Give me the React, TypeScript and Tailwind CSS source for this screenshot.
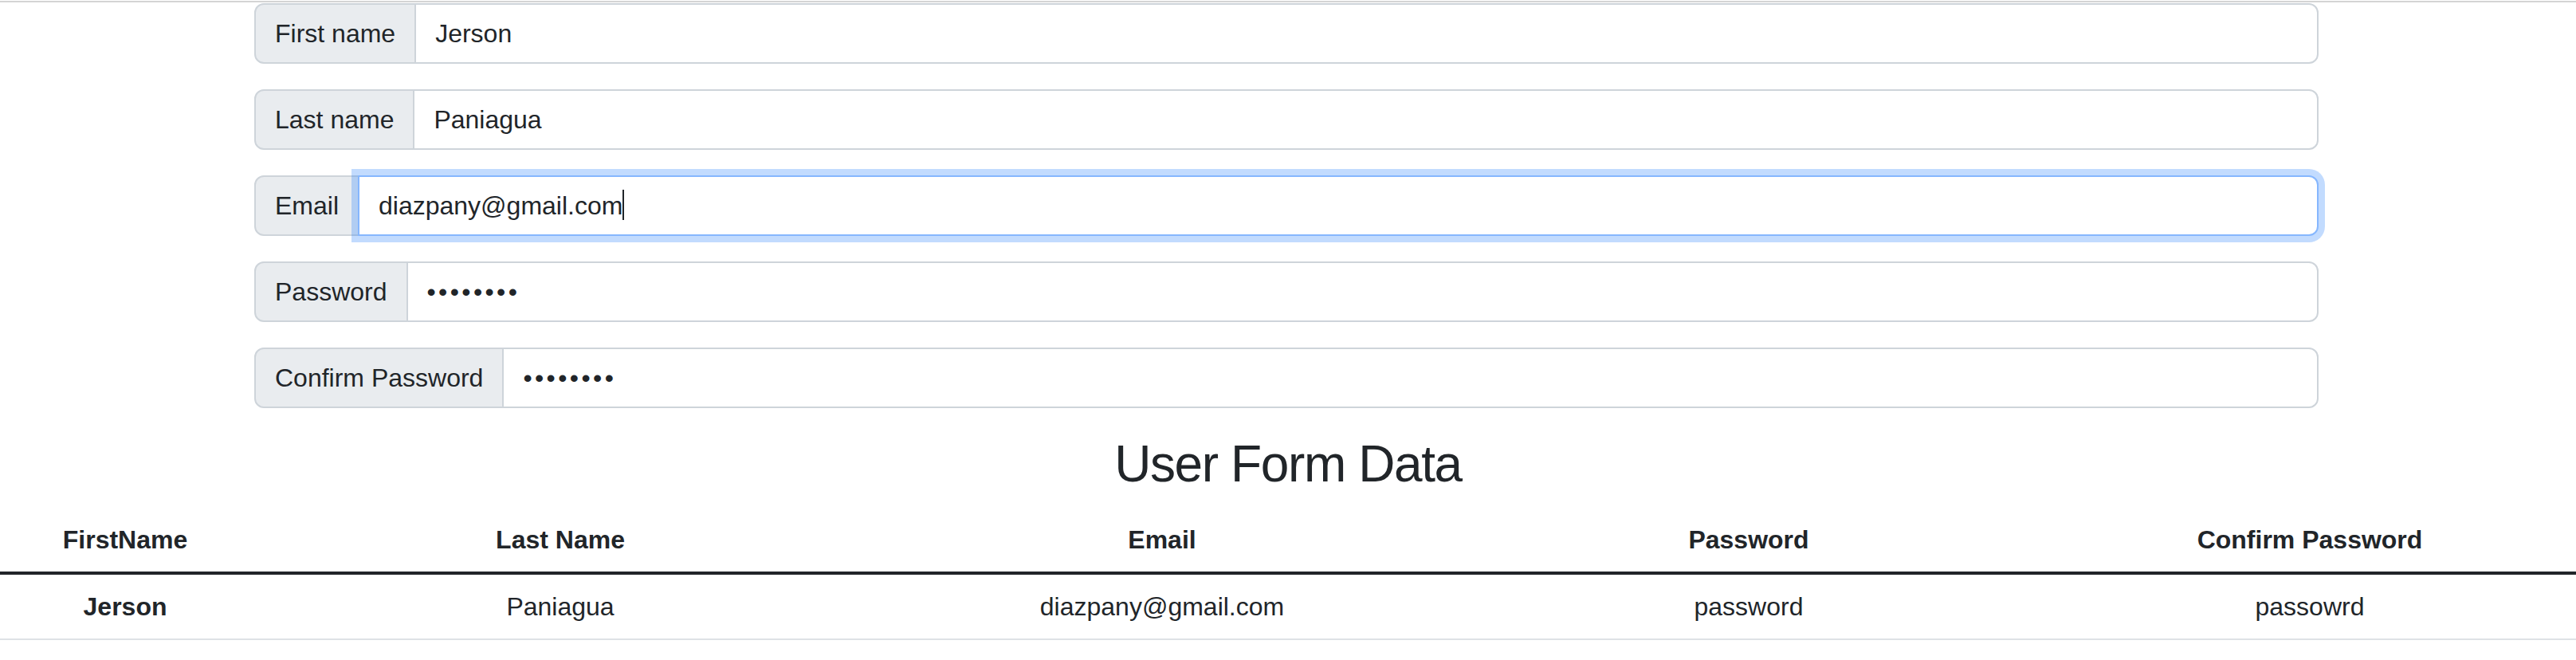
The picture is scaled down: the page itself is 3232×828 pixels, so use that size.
import React from "react";

const FONT = "font-['Liberation_Sans','Helvetica_Neue',Arial,sans-serif]";

function Field({
  label,
  value,
  type = "text",
  focused = false,
}: {
  label: string;
  value: string;
  type?: string;
  focused?: boolean;
}) {
  const base = "w-full h-full px-[24px] py-[12px] bg-white border-2 rounded-r-[12px] outline-none text-[32px] leading-[48px] text-[#212529]";
  let cls = `${base} border-[#ced4da]`;
  if (focused) cls = `${base} relative z-10 border-[#86b7fe] shadow-[0_0_0_8px_rgba(13,110,253,0.25)]`;
  else if (type === "password") cls = `${base} border-[#ced4da] tracking-[3.4px]`;

  return (
    <div className="flex w-full h-[76px] mb-[32px]">
      <span className="flex items-center shrink-0 px-[24px] bg-[#e9ecef] border-2 border-[#ced4da] rounded-l-[12px] text-[32px] leading-[48px] text-[#212529] whitespace-nowrap">
        {label}
      </span>
      <div className="relative flex-1 -ml-[2px]">
        <input type={type} value={value} readOnly className={cls} />
        {focused && (
          <span className="absolute z-20 left-[332px] top-[18px] w-[2px] h-[38px] bg-[#212529]" />
        )}
      </div>
    </div>
  );
}

const columns = [
  { name: "FirstName", w: "w-[314px]" },
  { name: "Last Name", w: "w-[778px]" },
  { name: "Email", w: "w-[732px]" },
  { name: "Password", w: "w-[740px]" },
  { name: "Confirm Password", w: "w-[668px]" },
];

export default function App() {
  return (
    <div className={`${FONT} bg-white text-[#212529] w-[3232px] h-[828px] overflow-hidden pt-[1px]`}>
      <div className="h-[2px] bg-[#d4d4d4]" />

      <div className="ml-[319px] w-[2590px] mt-[1px]">
        <Field label="First name" value="Jerson" />
        <Field label="Last name" value="Paniagua" />
        <Field label="Email" value="diazpany@gmail.com" type="email" focused />
        <Field label="Password" value="password" type="password" />
        <Field label="Confirm Password" value="passowrd" type="password" />
      </div>

      <h2 className="text-center text-[64px] leading-[76.8px] font-medium tracking-[-1.4px] mb-[16px]">
        User Form Data
      </h2>

      <table className="w-full border-separate border-spacing-0 text-[32px] leading-[48px] text-center">
        <colgroup>
          {columns.map((c) => (
            <col key={c.name} className={c.w} />
          ))}
        </colgroup>
        <thead>
          <tr>
            {columns.map((c) => (
              <th key={c.name} className="p-[16px] font-bold border-b-4 border-[#212529]">
                {c.name}
              </th>
            ))}
          </tr>
        </thead>
        <tbody>
          <tr>
            <th scope="row" className="p-[16px] font-bold border-b-2 border-[#dee2e6]">Jerson</th>
            <td className="p-[16px] border-b-2 border-[#dee2e6]">Paniagua</td>
            <td className="p-[16px] border-b-2 border-[#dee2e6]">diazpany@gmail.com</td>
            <td className="p-[16px] border-b-2 border-[#dee2e6]">password</td>
            <td className="p-[16px] border-b-2 border-[#dee2e6]">passowrd</td>
          </tr>
        </tbody>
      </table>
    </div>
  );
}
